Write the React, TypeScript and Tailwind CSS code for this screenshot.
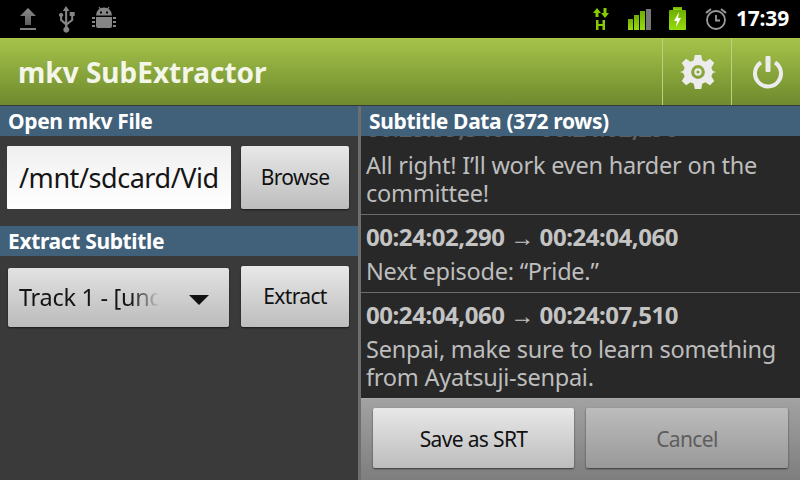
import React from "react";

const font = { fontFamily: '"Noto Sans", "Open Sans", sans-serif' };

function Header({ children }: { children: React.ReactNode }) {
  return (
    <div className="h-[30px] bg-[#41607a] pl-[8px] text-[21px] leading-[30px] font-bold text-white whitespace-nowrap tracking-[-0.35px]">
      {children}
    </div>
  );
}

function Btn({ children, className, off }: { children: React.ReactNode; className: string; off?: boolean }) {
  return (
    <div
      className={
        "flex items-center justify-center rounded-[2px] bg-gradient-to-b text-[21px] tracking-[-0.65px] shadow-[0_1px_2px_rgba(0,0,0,0.6)] " +
        (off ? "from-[#bcbcbc] to-[#999999] text-[#5e5e5e] " : "from-[#e8e8e8] to-[#bdbdbd] text-[#111111] ") +
        className
      }
    >
      {children}
    </div>
  );
}

function Entry({ time, text, last }: { time: string; text: React.ReactNode; last?: boolean }) {
  return (
    <div className={"px-[5px] pt-[5px] " + (last ? "" : "h-[78px] border-b border-[#6b6b6b]")}>
      <div className="text-[24px] leading-[34px] font-bold text-[#c4c4c4] whitespace-nowrap tracking-[-0.45px]">{time}</div>
      <div className="mt-[3px] text-[23.5px] leading-[28px] text-[#bdbdbd] tracking-[-0.24px]">{text}</div>
    </div>
  );
}

export default function App() {
  return (
    <div style={font} className="w-[800px] h-[480px] overflow-hidden flex flex-col bg-[#3a3a3a]">
      {/* status bar */}
      <div className="h-[38px] shrink-0 bg-black flex items-center">
        <svg width="140" height="38" viewBox="0 0 140 38" className="shrink-0">
          <defs>
            <linearGradient id="up" x1="0" y1="0" x2="0" y2="1">
              <stop offset="0" stopColor="#8c8c8c" />
              <stop offset="1" stopColor="#5c5c5c" />
            </linearGradient>
          </defs>
          <path d="M28 8l8 8h-5v9h-6v-9h-5z" fill="url(#up)" />
          <rect x="20" y="28" width="16" height="2" fill="#808080" />
          <g fill="#858585">
            <path d="M66 6l3.500 5h-2.300v11.500l4-3V16h-1.500v-4h5v4h-1.500v4.500l-5.700 4.500V27a3 3 0 1 1-2.400 0v-2l-5-4.500v-3.700a2 2 0 1 1 2 0v2.700l3 2.500V11h-2.300z" />
            <path d="M96 15.500a8 8 0 0 1 16 0zM96 17h16v9a2 2 0 0 1-2 2H98a2 2 0 0 1-2-2z" />
            <path d="M92 17h3v2h-3zM92 21h3v2h-3zM92 25h3v2h-3zM113 17h3v2h-3zM113 21h3v2h-3zM113 25h3v2h-3z" />
          </g>
          <path d="M99 7l2 3M109 7l-2 3" stroke="#858585" strokeWidth="1.200" />
          <rect x="100" y="11.500" width="2" height="2" fill="#000000" />
          <rect x="106" y="11.500" width="2" height="2" fill="#000000" />
        </svg>
        <div className="flex-1" />
        <svg width="150" height="38" viewBox="0 0 150 38" className="shrink-0">
          <defs>
            <linearGradient id="lime" x1="0" y1="0" x2="0" y2="1">
              <stop offset="0" stopColor="#6fae00" />
              <stop offset="1" stopColor="#97dc10" />
            </linearGradient>
          </defs>
          <g fill="#86cc00">
            <path d="M44 8l4 5h-2.500v4h-3v-4H40zM52 18l-4-5h2.500V8h3v5H56z" />
            <path d="M43 20h2.500v4h4v-4H52v10h-2.500v-4h-4v4H43z" />
          </g>
          <g fill="url(#lime)">
            <rect x="75" y="19" width="5" height="11" />
            <rect x="81" y="15" width="5" height="15" />
            <rect x="87" y="11" width="5" height="19" />
            <rect x="116" y="10" width="17" height="20" rx="1" />
            <rect x="120" y="7" width="9" height="3" />
          </g>
          <rect x="93" y="9" width="5" height="21" fill="#777777" />
          <path d="M126 12l-5 9h3l-1 6 5-9h-3z" fill="#ffffff" />
        </svg>
        <svg width="26" height="28" viewBox="0 0 26 28" className="shrink-0">
          <g fill="none" stroke="#9a9a9a">
            <circle cx="13" cy="15" r="9" strokeWidth="1.800" />
            <path d="M13 10v5.500h4" strokeWidth="1.800" />
            <path d="M3 8l5-4M23 8l-5-4" strokeWidth="2" />
          </g>
        </svg>
        <div className="w-[71px] pl-[7px] text-[21px] font-bold tracking-[-0.2px] text-white whitespace-nowrap">17:39</div>
      </div>

      {/* action bar */}
      <div className="h-[67px] shrink-0 flex bg-gradient-to-b from-[#a6c44a] to-[#6e8a2e]">
        <div className="flex-1 pl-[18px] text-[28px] leading-[68px] font-bold text-[#f4f6ea] whitespace-nowrap">mkv SubExtractor</div>
        <div className="w-[69px] flex items-center justify-center border-l border-[#bdd07f] pl-[2px]">
          <svg width="36" height="36" viewBox="0 0 34 34">
            <path
              fill="#ececec"
              fillRule="evenodd"
              d="M14 1h6l1 5 3 1.300 4.300-2.700 4 4-2.700 4.300L31 16l3 1-3 1-1.400 3.100 2.700 4.300-4 4-4.300-2.700L21 28l-1 5h-6l-1-5-3-1.300-4.300 2.700-4-4 2.700-4.300L3 18l-3-1 3-1 1.400-3.100L1.700 8.600l4-4L10 7.300 13 6zM17 10.500a6.500 6.500 0 1 0 0 13 6.500 6.500 0 0 0 0-13zM17 13.500a3.500 3.500 0 1 1 0 7 3.500 3.500 0 0 1 0-7zM17 15.500a1.500 1.500 0 1 0 0 3 1.500 1.500 0 0 0 0-3z"
            />
          </svg>
        </div>
        <div className="w-[69px] flex items-center justify-center border-l border-[#bdd07f] pl-[4px]">
          <svg width="34" height="34" viewBox="0 0 34 34">
            <path d="M10 7.500a13 13 0 1 0 14 0" fill="none" stroke="#ececec" strokeWidth="4" />
            <rect x="14.500" y="1" width="5" height="16" rx="1" fill="#ececec" />
          </svg>
        </div>
      </div>

      {/* body */}
      <div className="flex-1 min-h-0 flex pt-px bg-[#3a3a3a]">
        <div className="w-[358px] shrink-0 bg-[#3a3a3a]">
          <Header>Open mkv File</Header>
          <div className="h-[90px] pt-[10px] pl-[7px] flex gap-[10px]">
            <div className="w-[224px] h-[63px] bg-gradient-to-b from-[#f0f0f0] to-white rounded-[1px] pl-[12px] overflow-hidden text-[#151515] text-[27px] leading-[63px] whitespace-nowrap tracking-[-0.45px]">/mnt/sdcard/Vid</div>
            <Btn className="w-[108px] h-[63px] pt-[1px]">Browse</Btn>
          </div>
          <Header>Extract Subtitle</Header>
          <div className="pt-[10px] pl-[8px] flex items-start gap-[12px]">
            <div className="w-[221px] h-[59px] mt-[2px] rounded-[2px] bg-gradient-to-b from-[#e2e2e2] to-[#bbbbbb] shadow-[0_1px_2px_rgba(0,0,0,0.6)] flex items-center pl-[11px] pt-[1px] relative">
              <span className="w-[140px] overflow-hidden whitespace-nowrap text-[23.5px] tracking-[-0.3px] text-[#151515] [mask-image:linear-gradient(to_right,black_80%,transparent)]">Track 1 - [und]</span>
              <span className="absolute left-[181px] top-[27px] w-0 h-0 border-l-[10px] border-r-[10px] border-t-[10px] border-l-transparent border-r-transparent border-t-[#111111]" />
            </div>
            <Btn className="w-[108px] h-[61px] pt-[1px]">Extract</Btn>
          </div>
        </div>
        <div className="w-[3px] shrink-0 bg-[#6e6e6e]" />
        <div className="flex-1 min-w-0 flex flex-col bg-[#282828]">
          <Header>Subtitle Data (372 rows)</Header>
          <div className="h-[262px] shrink-0 overflow-hidden">
            <div className="h-[79px] border-b border-[#6b6b6b] px-[5px] relative overflow-hidden">
              <div className="absolute left-[5px] -top-[24px] text-[24px] leading-[32px] font-bold text-[#5e5e5e] whitespace-nowrap tracking-[-0.45px]">00:23:59,340 → 00:24:02,290</div>
              <div className="pt-[15px] text-[23.5px] leading-[28px] text-[#bdbdbd] tracking-[-0.24px]">All right! I’ll work even harder on the committee!</div>
            </div>
            <Entry time="00:24:02,290 → 00:24:04,060" text="Next episode: “Pride.”" />
            <Entry time="00:24:04,060 → 00:24:07,510" text="Senpai, make sure to learn something from Ayatsuji-senpai." last />
          </div>
          <div className="flex-1 border-t border-[#a8a8a8] bg-gradient-to-b from-[#a2a2a2] to-[#7e7e7e] pl-[12px] pt-[9px] flex items-start gap-[12px]">
            <Btn className="w-[201px] h-[60px] pt-[3px]">Save as SRT</Btn>
            <Btn off className="w-[202px] h-[60px] pt-[3px]">Cancel</Btn>
          </div>
        </div>
      </div>
    </div>
  );
}
